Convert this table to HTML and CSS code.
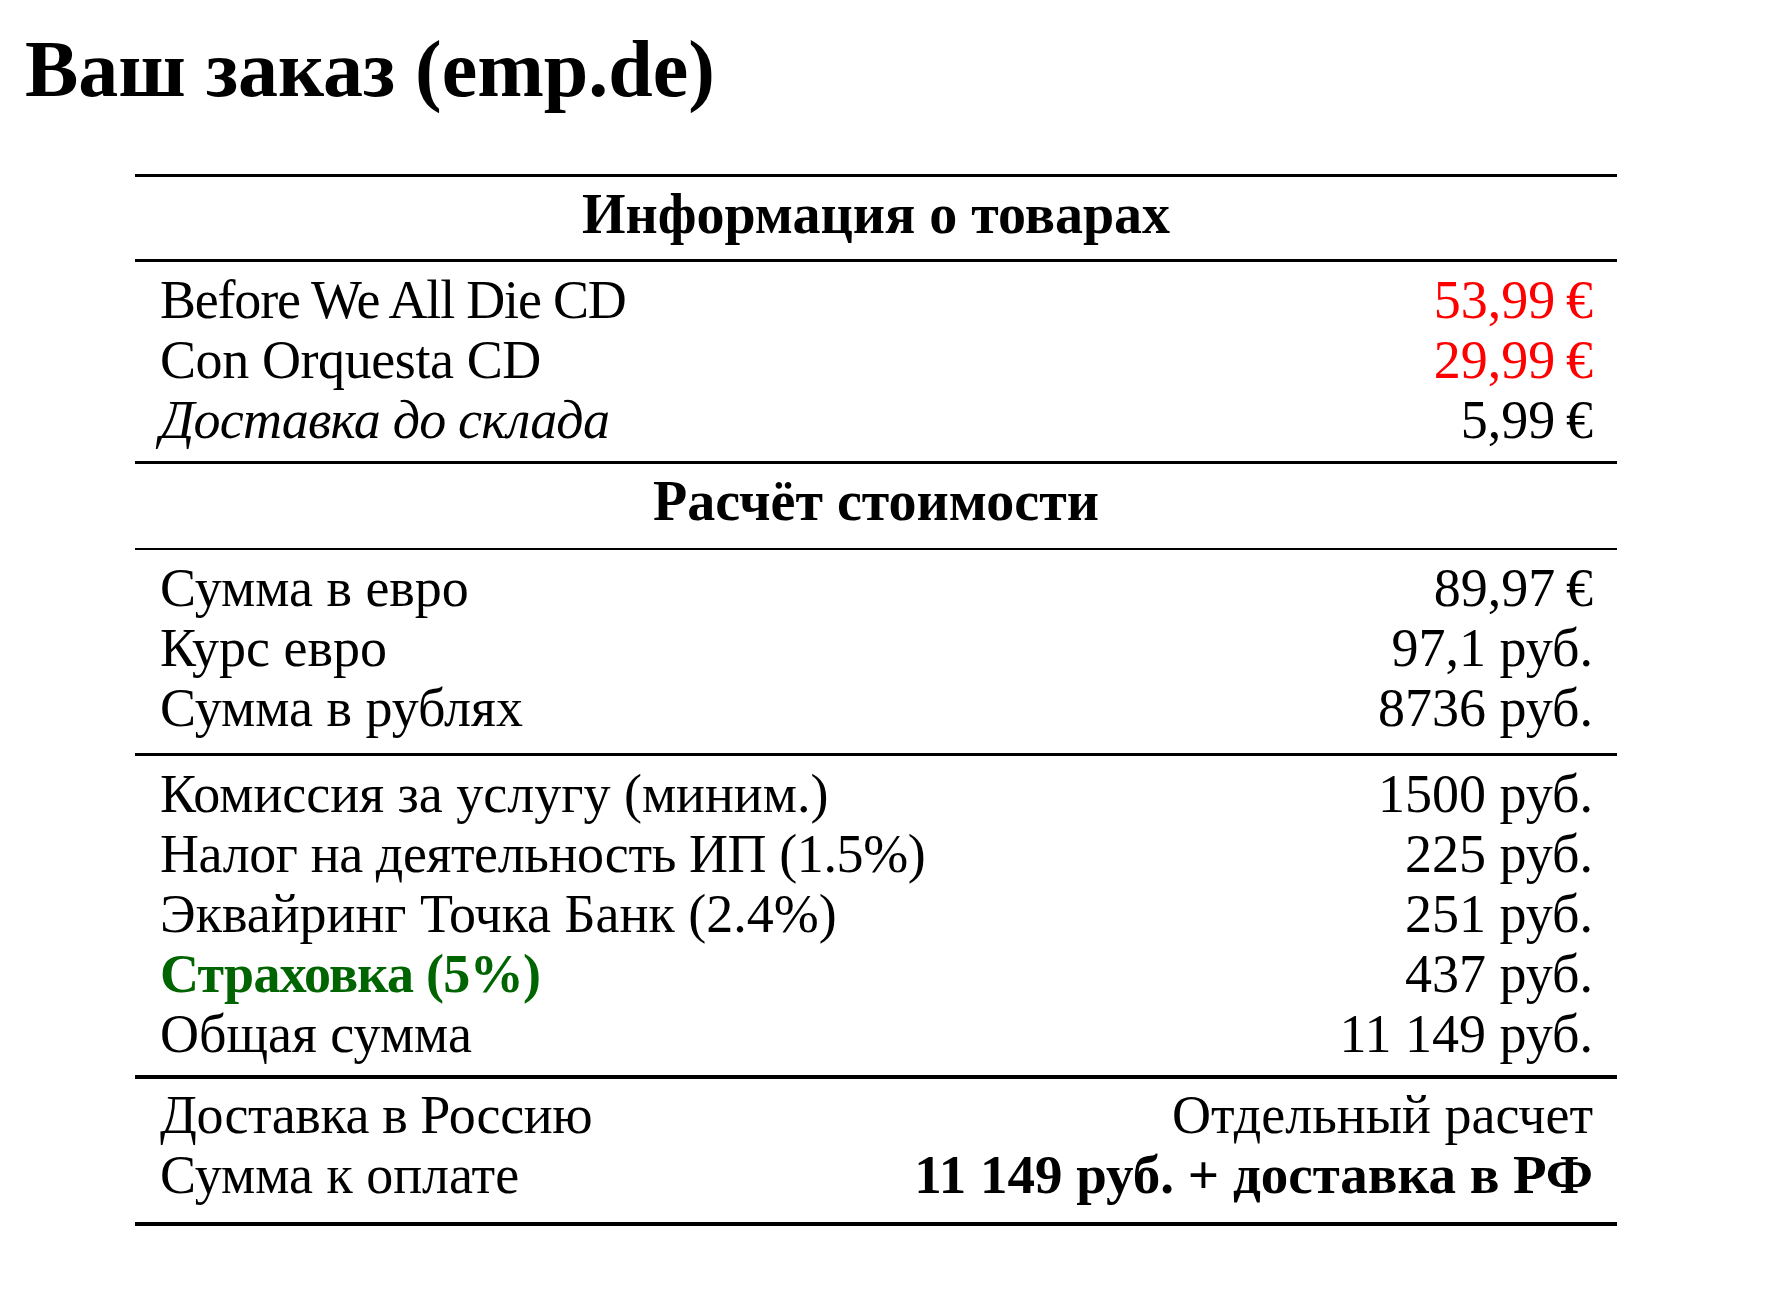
FILE: index.html
```html
<!DOCTYPE html>
<html lang="ru">
<head>
<meta charset="utf-8">
<title>Ваш заказ (emp.de)</title>
<link rel="stylesheet" href="styles.css">
</head>
<body>
<h1 class="title">Ваш заказ (emp.de)</h1>
<div class="order">
  <div class="sec head">Информация о товарах</div>
  <div class="sec rows s1">
    <div class="row"><span class="lat">Before We All Die CD</span><span class="red">53,99&#8239;€</span></div>
    <div class="row"><span class="lat2">Con Orquesta CD</span><span class="red">29,99&#8239;€</span></div>
    <div class="row"><span class="it">Доставка до склада</span><span>5,99&#8239;€</span></div>
  </div>
  <div class="sec head thin">Расчёт стоимости</div>
  <div class="sec rows s3">
    <div class="row"><span>Сумма в евро</span><span>89,97&#8239;€</span></div>
    <div class="row"><span>Курс евро</span><span>97,1 руб.</span></div>
    <div class="row"><span>Сумма в рублях</span><span>8736 руб.</span></div>
  </div>
  <div class="sec rows s4">
    <div class="row"><span>Комиссия за услугу (миним.)</span><span>1500 руб.</span></div>
    <div class="row"><span class="tight">Налог на деятельность ИП (1.5%)</span><span>225 руб.</span></div>
    <div class="row"><span>Эквайринг Точка Банк (2.4%)</span><span>251 руб.</span></div>
    <div class="row"><span class="green">Страховка (5%)</span><span>437 руб.</span></div>
    <div class="row"><span>Общая сумма</span><span>11 149 руб.</span></div>
  </div>
  <div class="sec rows s5">
    <div class="row"><span class="tight">Доставка в Россию</span><span>Отдельный расчет</span></div>
    <div class="row"><span>Сумма к оплате</span><span class="b">11 149 руб. + доставка в РФ</span></div>
  </div>
</div>
</body>
</html>
```
FILE: styles.css
```css
html, body {
  margin: 0;
  padding: 0;
  background: #fff;
  color: #000;
  font-family: "Liberation Serif", "DejaVu Serif", serif;
}

.title {
  margin: 24px 0 0 25px;
  font-size: 80px;
  font-weight: bold;
  line-height: normal;
}

.order {
  margin: 59px 0 0 135px;
  width: 1482px;
  border-top: 3px solid #000;
  font-size: 54px;
}

.sec {
  border-bottom: 3px solid #000;
}

.head {
  padding: 7px 0 15px;
  line-height: 60px;
  font-size: 56px;
  text-align: center;
  font-weight: bold;
}

.sec.thin {
  border-bottom-width: 2px;
  padding-bottom: 17px;
}

.rows {
  padding: 8px 24px 11px 25px;
}

.s3 { padding-bottom: 15px; }
.s4 { border-bottom-width: 4px; }
.s5 { padding-top: 6px; padding-bottom: 17px; border-bottom-width: 4px; }

.row {
  display: flex;
  justify-content: space-between;
  line-height: 60px;
}

.lat { letter-spacing: -1.2px; }
.lat2 { letter-spacing: -0.4px; }
.tight { letter-spacing: -0.4px; }
.red { color: #ff0000; }
.green { color: #006400; font-weight: bold; letter-spacing: -0.7px; }
.it { font-style: italic; letter-spacing: -0.8px; }
.b { font-weight: bold; font-size: 55px; }
```
